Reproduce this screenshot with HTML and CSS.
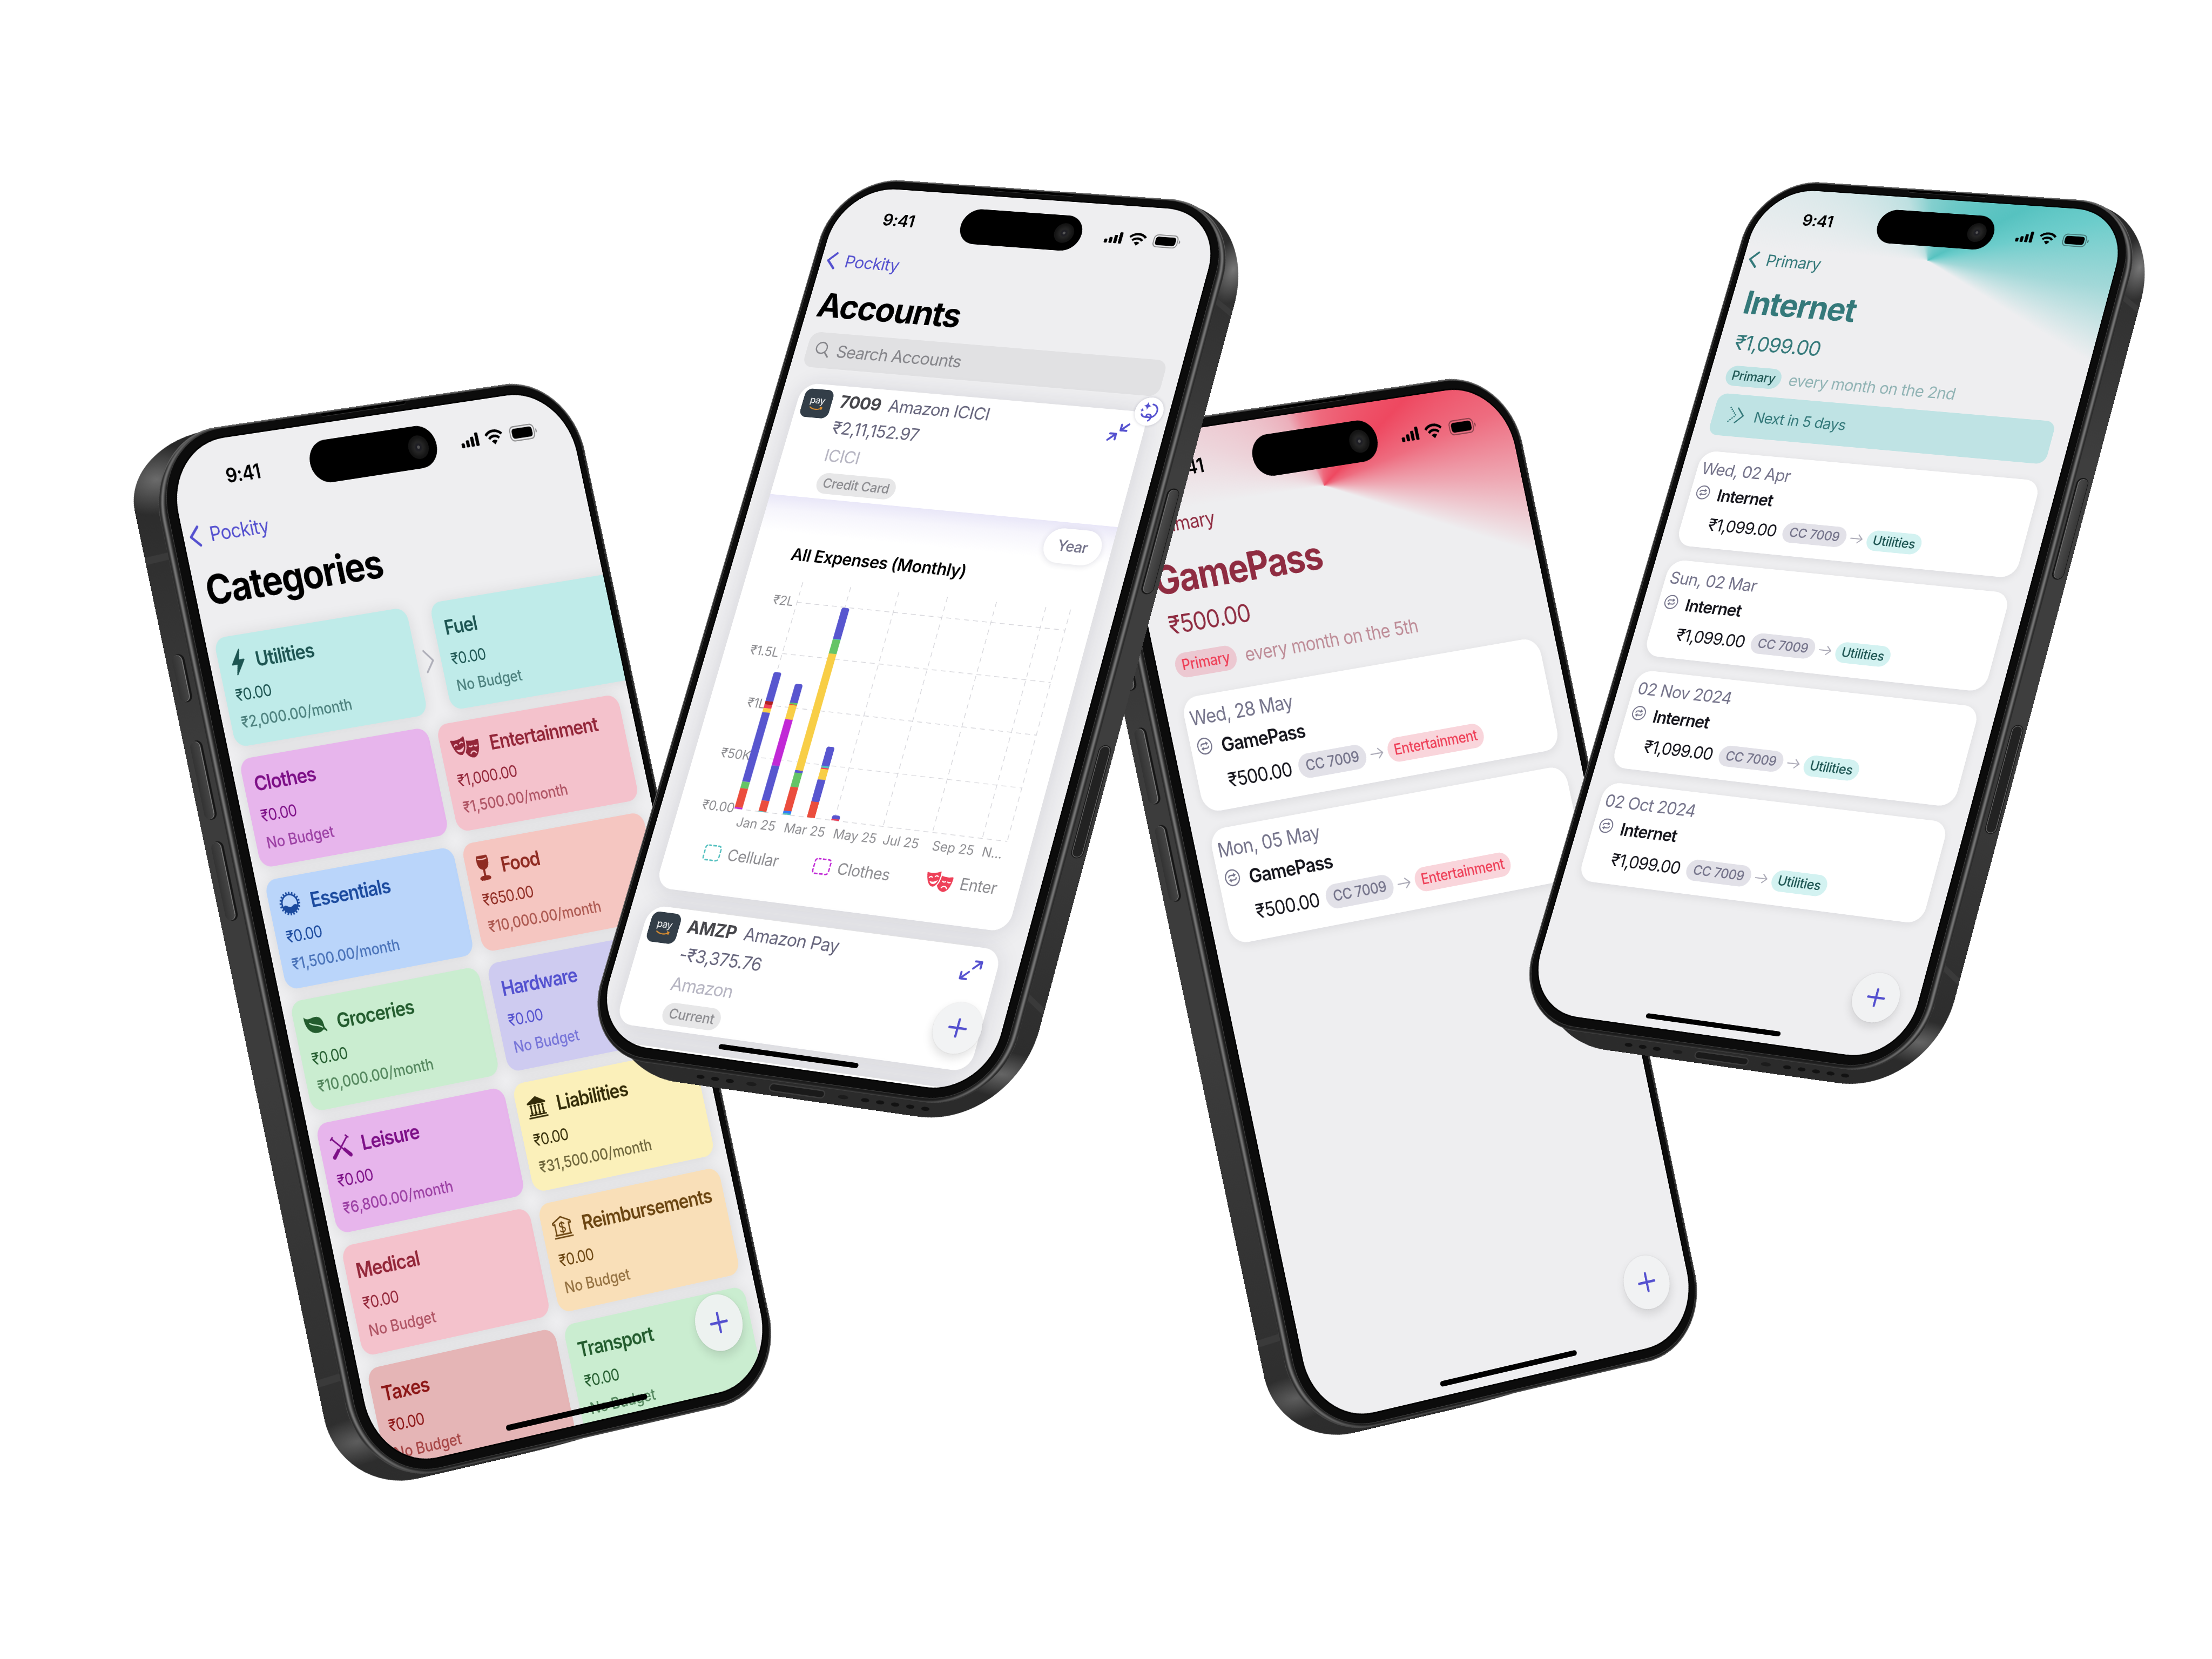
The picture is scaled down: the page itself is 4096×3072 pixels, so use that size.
FILE: index.html
```html
<!DOCTYPE html>
<html lang="en">
<head>
<meta charset="utf-8">
<title>Pockity</title>
<link rel="stylesheet" href="styles.css">
</head>
<body>
<svg class="sprite" width="0" height="0">
  <symbol id="i-status" viewBox="0 0 78 14">
    <rect x="0.500" y="8.500" width="3.200" height="4" rx="1"/><rect x="5.300" y="6.500" width="3.200" height="6" rx="1"/><rect x="10.100" y="4" width="3.200" height="8.500" rx="1"/><rect x="14.900" y="1" width="3.200" height="11.500" rx="1"/>
    <path d="M25.600 5.100a11.300 11.300 0 0 1 16 0M28.500 8.300a7.200 7.200 0 0 1 10.200 0" fill="none" stroke="currentColor" stroke-width="2.300"/>
    <path d="M30.800 10.500a4 4 0 0 1 5.600 0l-2.800 2.900z"/>
    <rect x="50" y="0.900" width="24" height="12.200" rx="4" fill="none" stroke="currentColor" stroke-opacity=".4" stroke-width="1"/>
    <rect x="51.800" y="2.700" width="20.400" height="8.600" rx="2.600"/>
    <path d="M75.500 5v4a2.300 2.300 0 0 0 0-4z" opacity=".45"/>
  </symbol>
  <symbol id="i-back" viewBox="0 0 12 20"><path d="M10.300 1.600 2 10l8.300 8.400" fill="none" stroke="currentColor" stroke-width="2.400" stroke-linecap="round" stroke-linejoin="round"/></symbol>
  <symbol id="i-next" viewBox="0 0 12 22"><path d="M2 2l7.500 9L2 20" fill="none" stroke="currentColor" stroke-width="1.700" stroke-linecap="round" stroke-linejoin="round"/></symbol>
  <symbol id="i-plus" viewBox="0 0 20 20"><path d="M10 1.700v16.600M1.700 10h16.600" fill="none" stroke="currentColor" stroke-width="2.300" stroke-linecap="round"/></symbol>
  <symbol id="i-bolt" viewBox="0 0 14 22"><path d="M9.300.5.800 12.200c-.3.400 0 .9.500.9h4.500L3.700 21c-.2.700.5 1 1 .500L13.200 9.900c.3-.4 0-.9-.5-.9H8.200L10.300 1.200c.2-.8-.5-1.200-1-.7z"/></symbol>
  <symbol id="i-masks" viewBox="0 0 30 22">
    <path d="M16.500 5.200c3.500 1.200 7.800 1.400 11.300.4.900-.2 1.500.3 1.500 1.200-.1 6-1.600 13.400-7.300 14.400-4.200-.1-7-3.300-8.300-7z"/>
    <path d="M1.600 2.700C5.600 3.800 10.500 3 14 .9c.9-.5 1.700 0 1.800.9.600 5.700.6 12.600-5.100 16C4.500 18.400 1.500 10.700.3 4.200c-.2-1 .4-1.700 1.300-1.500z" class="cut-edge"/>
    <path d="M4.100 8.500c.9-1.300 2-1.400 3-.5M10 7.100c.8-1.200 2-1.400 3-.5M19 10.700c1 .8 2 .8 3 .1M24.300 10.900c.9.700 1.800.7 2.700.1M19.300 17.300c1.500-2.300 4.200-2.300 5.600.1" class="cut-line"/>
    <path d="M5.300 12c3 .9 6 .1 8.200-2-.4 5.400-6.200 6.200-8.200 2z" class="cut-fill"/>
  </symbol>
  <symbol id="i-wine" viewBox="0 0 16 24"><path d="M3.200.7h9.600c.5 0 .9.300 1 .8 1.300 6-.1 11.300-4.700 12.100v5.500c3 .2 4.800 1 4.800 2.300 0 1.600-2.600 2.200-5.900 2.200s-5.900-.6-5.900-2.200c0-1.300 1.800-2.100 4.800-2.300v-5.500C2.300 12.800.9 7.500 2.200 1.500c.1-.5.5-.8 1-.8z"/><path d="M3.600 3.600c2.800.7 6 .7 8.800 0" class="cut-line"/></symbol>
  <symbol id="i-cap" viewBox="0 0 22 22"><circle cx="11" cy="11" r="9.700" fill="none" stroke="currentColor" stroke-width="2" stroke-dasharray="1.500 1.550"/><circle cx="11" cy="11" r="8.200" fill="none" stroke="currentColor" stroke-width="1.500"/><path d="M3.200 13.500c2-1.700 3.600-1.500 5.200-.3s3.600 1.200 5.200 0 3.400-1.300 5.200.3c-1.200 3.600-4.400 5.700-7.800 5.700s-6.600-2.100-7.800-5.700z"/></symbol>
  <symbol id="i-leaf" viewBox="0 0 23 19"><path d="M.6 1.200C2.300 3.500 5 3.300 8 2.700c5.500-1.100 10-.3 11.400 5 .6 2.300.4 4.300 1 5.500.6 1 1.600 1.700 1.900 3.100.1.600-.8.900-1.200.4-.8-1-1.400-1.700-2.700-1.800-2.200 2-6.200 2.600-10 1.500C2.500 14.400-.5 8.200.1 1.300c0-.4.300-.4.500-.1z"/><path d="M5.500 7.200c3 2.800 7.800 2 12.300 5.300" class="cut-line"/></symbol>
  <symbol id="i-tools" viewBox="0 0 22 22"><path d="M3 2.200 14 14M19.600 2.200 8.200 14.200" fill="none" stroke="currentColor" stroke-width="1.500"/><path d="M1.400 3.700 4.500.8M17.500.9l3.200 2.900" stroke="currentColor" stroke-width="1.400"/><path d="m12.400 13.900 2.200-2.200 6.300 6.200c1.600 1.900-.8 4.300-2.700 2.600zM9.700 13.900l-2.200-2.200-6.300 6.200c-1.600 1.900.8 4.300 2.700 2.600z"/></symbol>
  <symbol id="i-bank" viewBox="0 0 22 21"><path d="M11 .4 20.800 6c.5.300.3 1.500-.4 1.500H1.600c-.7 0-.9-1.200-.4-1.500zM1.800 16.800h18.400v1.300H1.800zM.6 19.100h20.800v1.500H.6z"/><path d="M4.700 8v9M8.900 8v9M13.100 8v9M17.300 8v9" stroke="currentColor" stroke-width="1.700"/><path d="M3.300 9h2.800M7.500 9h2.800M11.700 9h2.800M15.900 9h2.800M3.300 15.600h2.800M7.500 15.600h2.800M11.700 15.600h2.800M15.900 15.600h2.800" stroke="currentColor" stroke-width="1"/></symbol>
  <symbol id="i-house" viewBox="0 0 22 21"><path d="M3.500 17V6.500M18.500 17V6.500M1.500 7.500V5.800L11 .9l9.500 4.900v1.700h-2M1.500 7.500h2M2 17.300h18M.8 19.800h20.400" fill="none" stroke="currentColor" stroke-width="1.400" stroke-linejoin="round"/><path d="M13.700 7.900c-.5-1-1.500-1.400-2.700-1.400-1.500 0-2.600.7-2.600 2 0 2.900 5.400 1.300 5.400 4.200 0 1.300-1.200 2.100-2.800 2.100-1.400 0-2.500-.5-2.900-1.600M11 5.200v11" fill="none" stroke="currentColor" stroke-width="1.200"/></symbol>
  <symbol id="i-search" viewBox="0 0 18 20"><circle cx="7.500" cy="8" r="6.200" fill="none" stroke="currentColor" stroke-width="1.500"/><path d="m12 12.700 4.600 5" stroke="currentColor" stroke-width="1.800" stroke-linecap="round"/></symbol>
  <symbol id="i-shrink" viewBox="0 0 24 24"><path d="M22 2.500l-7.500 6.800M14 3.500v6.300h6.600M2 21.500l7.500-6.800M10 20.500v-6.300H3.400" fill="none" stroke="currentColor" stroke-width="2.300" stroke-linecap="round" stroke-linejoin="round"/></symbol>
  <symbol id="i-grow" viewBox="0 0 24 24"><path d="M13.700 10l7.800-7.500M14.800 2.200h7v6.800M10.300 14l-7.800 7.500M9.200 21.800h-7v-6.800" fill="none" stroke="currentColor" stroke-width="2.200" stroke-linecap="round" stroke-linejoin="round"/></symbol>
  <symbol id="i-magic" viewBox="0 0 24 24"><path d="M8.600.5c.6 3.300 1.500 4.300 4.600 5-3.100.8-4 1.700-4.600 5-.6-3.300-1.500-4.200-4.600-5C7.100 4.800 8 3.800 8.600.5zM3.400 8.200c.4 1.800.8 2.300 2.500 2.700-1.700.4-2.100.9-2.500 2.700-.4-1.800-.8-2.300-2.500-2.700 1.700-.4 2.100-.9 2.500-2.700z"/><path d="M14.600 3.200c4.600.6 7.300 4.600 6.500 9-.7 4.200-4.300 7-8.300 6.600-1.800-.2-3-1-2.800-2.200.2-1.300 2.200-1.800 4-1 2.400 1.200 2.300 4.800-.7 7.200M3.800 15.600c.8 2.200 3.600 3.600 7 3" fill="none" stroke="currentColor" stroke-width="1.900" stroke-linecap="round"/></symbol>
  <symbol id="i-dash" viewBox="0 0 20 18"><rect x="1.200" y="1.200" width="17.600" height="15.600" rx="3" fill="none" stroke="currentColor" stroke-width="1.500" stroke-dasharray="4 1.700" stroke-dashoffset="1"/></symbol>
  <symbol id="i-repeat" viewBox="0 0 18 18"><circle cx="9" cy="9" r="8" fill="none" stroke="currentColor" stroke-width="1.300"/><path d="M4.800 8.900c0-1.700 1-2.400 2.400-2.400h4M13.200 9.100c0 1.700-1 2.400-2.400 2.400h-4" fill="none" stroke="currentColor" stroke-width="1.300"/><path d="M10.600 4.300v4.400l2.900-2.200zM7.400 9.300v4.400l-2.900-2.200z"/></symbol>
  <symbol id="i-arrow" viewBox="0 0 16 12"><path d="M1 6h13.500M9.700 1.300 14.600 6l-4.900 4.700" fill="none" stroke="currentColor" stroke-width="1.200" stroke-linecap="round" stroke-linejoin="round"/></symbol>
  <symbol id="i-forward" viewBox="0 0 22 20"><path d="M11 1.500l8 8.500-8 8.500" fill="none" stroke="currentColor" stroke-width="1.600" stroke-linecap="round"/><path d="M2 1.500l8 8.500-8 8.500" fill="none" stroke="currentColor" stroke-width="1.700" stroke-linecap="round" stroke-dasharray=".1 2.650"/></symbol>
</svg>

<main class="board">

  <!-- Categories -->
  <section class="phone" data-corners="357,969 1221,840 1681,2994 822,3192">
    <div class="device lean-left">
      <div class="chassis"><i class="band band-top"></i><i class="band band-bottom"></i><i class="key key-action"></i><i class="key key-up"></i><i class="key key-down"></i></div>
      <div class="rim"></div>
      <div class="bezel"><i class="ear"></i></div>
      <div class="screen">
        <div class="nav indigo"><svg class="back"><use href="#i-back"/></svg>Pockity</div>
        <h1 class="title tight">Categories</h1>
        <div class="swipe-row">
          <article class="cat teal"><h2><svg class="bolt"><use href="#i-bolt"/></svg>Utilities</h2><p>₹0.00</p><small>₹2,000.00/month</small></article>
          <svg class="chev"><use href="#i-next"/></svg>
          <article class="cat teal bleed"><h2>Fuel</h2><p>₹0.00</p><small>No Budget</small></article>
        </div>
        <div class="grid">
          <article class="cat magenta"><h2>Clothes</h2><p>₹0.00</p><small>No Budget</small></article>
          <article class="cat pink"><h2><svg class="masks"><use href="#i-masks"/></svg>Entertainment</h2><p>₹1,000.00</p><small>₹1,500.00/month</small></article>
          <article class="cat blue"><h2><svg class="cap"><use href="#i-cap"/></svg>Essentials</h2><p>₹0.00</p><small>₹1,500.00/month</small></article>
          <article class="cat coral"><h2><svg class="wine"><use href="#i-wine"/></svg>Food</h2><p>₹650.00</p><small>₹10,000.00/month</small></article>
          <article class="cat green"><h2><svg class="leaf"><use href="#i-leaf"/></svg>Groceries</h2><p>₹0.00</p><small>₹10,000.00/month</small></article>
          <article class="cat violet"><h2>Hardware</h2><p>₹0.00</p><small>No Budget</small></article>
          <article class="cat magenta"><h2><svg class="tools"><use href="#i-tools"/></svg>Leisure</h2><p>₹0.00</p><small>₹6,800.00/month</small></article>
          <article class="cat yellow"><h2><svg class="bank"><use href="#i-bank"/></svg>Liabilities</h2><p>₹0.00</p><small>₹31,500.00/month</small></article>
          <article class="cat pink"><h2>Medical</h2><p>₹0.00</p><small>No Budget</small></article>
          <article class="cat orange"><h2><svg class="bank"><use href="#i-house"/></svg>Reimbursements</h2><p>₹0.00</p><small>No Budget</small></article>
          <article class="cat brick"><h2>Taxes</h2><p>₹0.00</p><small>No Budget</small></article>
          <article class="cat green"><h2>Transport</h2><p>₹0.00</p><small>No Budget</small></article>
        </div>
        <div class="status"><b>9:41</b><svg><use href="#i-status"/></svg></div>
        <div class="island"><i></i></div>
        <div class="fab"><svg><use href="#i-plus"/></svg></div>
        <div class="home"></div>
      </div>
    </div>
  </section>

  <!-- GamePass -->
  <section class="phone" data-corners="2407,958 3258,829 3688,2898 2857,3093">
    <div class="device lean-left">
      <div class="chassis"><i class="band band-top"></i><i class="band band-bottom"></i><i class="key key-action"></i><i class="key key-up"></i><i class="key key-down"></i></div>
      <div class="rim"></div>
      <div class="bezel"><i class="ear"></i></div>
      <div class="screen glow-red">
        <div class="nav wine-ink"><svg class="back"><use href="#i-back"/></svg>Primary</div>
        <h1 class="title wine-ink">GamePass</h1>
        <p class="amount wine-ink">₹500.00</p>
        <div class="meta wine-ink"><span class="tag tag-rose">Primary</span><span class="when">every month on the 5th</span></div>
        <div class="list list-a">
          <article class="txn"><time>Wed, 28 May</time><h3><svg><use href="#i-repeat"/></svg>GamePass</h3><div class="flow"><span>₹500.00</span><em class="tag tag-gray">CC 7009</em><svg><use href="#i-arrow"/></svg><em class="tag tag-red">Entertainment</em></div></article>
          <article class="txn"><time>Mon, 05 May</time><h3><svg><use href="#i-repeat"/></svg>GamePass</h3><div class="flow"><span>₹500.00</span><em class="tag tag-gray">CC 7009</em><svg><use href="#i-arrow"/></svg><em class="tag tag-red">Entertainment</em></div></article>
        </div>
        <div class="status"><b>9:41</b><svg><use href="#i-status"/></svg></div>
        <div class="island"><i></i></div>
        <div class="fab"><svg><use href="#i-plus"/></svg></div>
        <div class="home"></div>
      </div>
    </div>
  </section>

  <!-- Accounts -->
  <section class="phone" data-corners="1830,403 2655,461 2136,2377 1285,2257">
    <div class="device lean-right">
      <div class="chassis"><i class="band band-top"></i><i class="band band-bottom"></i><i class="band band-foot"></i><i class="key key-power"></i><i class="key key-camera"></i>
        <div class="port"><i class="hole"></i><i class="hole"></i><i class="hole"></i><i class="screw"></i><i class="usb"></i><i class="screw"></i><i class="hole"></i><i class="hole"></i><i class="hole"></i><i class="hole"></i><i class="hole"></i></div>
      </div>
      <div class="rim"></div>
      <div class="bezel"><i class="ear"></i></div>
      <div class="screen">
        <div class="nav indigo"><svg class="back"><use href="#i-back"/></svg>Pockity</div>
        <h1 class="title snug">Accounts</h1>
        <div class="search"><svg><use href="#i-search"/></svg>Search Accounts</div>
        <div class="accounts">
          <article class="acct">
            <header>
              <div class="logo"><span>pay</span><svg viewBox="0 0 16 5"><path d="M1 1.200c4 3 9.500 3.200 13.400.6M12.400.8l2.300.600-.5 2.300" fill="none" stroke="#e0902f" stroke-width="1.100"/></svg></div>
              <div class="info"><h4><b>7009</b>Amazon ICICI</h4><p class="bal">₹2,11,152.97</p><p class="bankname">ICICI</p><span class="tag tag-plain">Credit Card</span></div>
              <svg class="toggle"><use href="#i-shrink"/></svg>
            </header>
            <div class="badge"><svg><use href="#i-magic"/></svg></div>
            <div class="panel">
              <div class="year">Year</div>
              <h5>All Expenses (Monthly)</h5>
              <svg class="chart" viewBox="18 396 355 250">
                <g class="gridlines">
                  <path d="M78 402V624.500M127.500 402V624.500M177 402V624.500M226.500 402V624.500M276 402V624.500M325.500 402V624.500M350.200 402V624.500"/>
                  <path d="M78 422H350.200M78 472.600H350.200M78 523.200H350.200M78 573.800H350.200M78 624.500H350.200"/>
                </g>
                <g class="axis end"><text x="74.500" y="426">₹2L</text><text x="74.500" y="476.500">₹1.5L</text><text x="76" y="527">₹1L</text><text x="76" y="577.500">₹50K</text><text x="75" y="628.500">₹0.00</text></g>
                <g class="axis"><text x="81" y="641">Jan 25</text><text x="130" y="641">Mar 25</text><text x="180" y="641">May 25</text><text x="230" y="641">Jul 25</text><text x="279.500" y="641">Sep 25</text><text x="329" y="641">N...</text></g>
                <g transform="translate(75 0)">
                  <path class="c-indigo" d="M0 493a2 2 0 0 1 2-2h4a2 2 0 0 1 2 2v27H0z"/><rect class="c-brick" y="519.600" width="8" height="3.500"/><rect class="c-rose" y="523" width="8" height="3.500"/><rect class="c-gold" y="526.400" width="8" height="4.200"/><rect class="c-indigo" y="530.500" width="8" height="67.700"/><rect class="c-green" y="598.200" width="8" height="6.500"/><rect class="c-red" y="604.600" width="8" height="18.500"/><rect class="c-magenta" y="623" width="8" height="1.500"/>
                </g>
                <g transform="translate(99.750 0)">
                  <path class="c-indigo" d="M0 502a2 2 0 0 1 2-2h4a2 2 0 0 1 2 2v17H0z"/><rect class="c-green" y="518.400" width="8" height="1.600"/><rect class="c-red" y="520" width="8" height="1"/><rect class="c-gold" y="520.800" width="8" height="14"/><rect class="c-magenta" y="534.700" width="8" height="45.200"/><rect class="c-indigo" y="579.800" width="8" height="34"/><rect class="c-red" y="613.700" width="8" height="10.300"/><rect class="c-teal" y="624" width="8" height=".6"/>
                </g>
                <g transform="translate(124.500 0)">
                  <path class="c-indigo" d="M0 424.500a2 2 0 0 1 2-2h4a2 2 0 0 1 2 2v29H0z"/><rect class="c-teal" y="453.200" width="8" height="1"/><rect class="c-green" y="453.900" width="8" height="14"/><rect class="c-gold" y="467.700" width="8" height="114"/><rect class="c-indigo" y="581.600" width="8" height="2.500"/><rect class="c-green" y="584" width="8" height="13.800"/><rect class="c-red" y="597.700" width="8" height="23.200"/><rect class="c-blue" y="620.800" width="8" height="2.400"/><rect class="c-teal" y="623.100" width="8" height="1.400"/>
                </g>
                <g transform="translate(149.250 0)">
                  <path class="c-indigo" d="M0 558a2 2 0 0 1 2-2h4a2 2 0 0 1 2 2v17H0z"/><rect class="c-teal" y="574.600" width="8" height="2"/><rect class="c-rose" y="576.500" width="8" height="1.200"/><rect class="c-gold" y="577.600" width="8" height="10.300"/><rect class="c-indigo" y="587.800" width="8" height="21.500"/><rect class="c-red" y="609.200" width="8" height="15.300"/>
                </g>
                <g transform="translate(174 0)"><path class="c-indigo" d="M0 621.500a2 2 0 0 1 2-2h4a2 2 0 0 1 2 2v2H0z"/><rect class="c-rose" y="623" width="8" height="1.500"/></g>
              </svg>
              <div class="legend"><span><svg class="sq c-teal-ink"><use href="#i-dash"/></svg>Cellular</span><span><svg class="sq c-magenta-ink"><use href="#i-dash"/></svg>Clothes</span><span><svg class="mk c-rose-ink"><use href="#i-masks"/></svg>Enter</span></div>
            </div>
          </article>
          <article class="acct">
            <header>
              <div class="logo"><span>pay</span><svg viewBox="0 0 16 5"><path d="M1 1.200c4 3 9.500 3.200 13.400.6M12.400.8l2.300.600-.5 2.300" fill="none" stroke="#e0902f" stroke-width="1.100"/></svg></div>
              <div class="info"><h4><b>AMZP</b>Amazon Pay</h4><p class="bal">-₹3,375.76</p><p class="bankname">Amazon</p><span class="tag tag-plain">Current</span></div>
              <svg class="toggle"><use href="#i-grow"/></svg>
            </header>
          </article>
          <article class="acct peek"></article>
        </div>
        <div class="status"><b>9:41</b><svg><use href="#i-status"/></svg></div>
        <div class="island"><i></i></div>
        <div class="fab"><svg><use href="#i-plus"/></svg></div>
        <div class="home"></div>
      </div>
    </div>
  </section>

  <!-- Internet -->
  <section class="phone" data-corners="3829,407 4623,461 4128,2306 3308,2191">
    <div class="device lean-right">
      <div class="chassis"><i class="band band-top"></i><i class="band band-bottom"></i><i class="band band-foot"></i><i class="key key-power"></i><i class="key key-camera"></i>
        <div class="port"><i class="hole"></i><i class="hole"></i><i class="hole"></i><i class="screw"></i><i class="usb"></i><i class="screw"></i><i class="hole"></i><i class="hole"></i><i class="hole"></i><i class="hole"></i><i class="hole"></i></div>
      </div>
      <div class="rim"></div>
      <div class="bezel"><i class="ear"></i></div>
      <div class="screen glow-teal">
        <div class="nav teal-ink"><svg class="back"><use href="#i-back"/></svg>Primary</div>
        <h1 class="title teal-ink">Internet</h1>
        <p class="amount teal-ink low">₹1,099.00</p>
        <div class="meta teal-ink"><span class="tag tag-mint">Primary</span><span class="when">every month on the 2nd</span></div>
        <div class="next"><svg><use href="#i-forward"/></svg>Next in 5 days</div>
        <div class="list">
          <article class="txn"><time>Wed, 02 Apr</time><h3><svg><use href="#i-repeat"/></svg>Internet</h3><div class="flow"><span>₹1,099.00</span><em class="tag tag-gray">CC 7009</em><svg><use href="#i-arrow"/></svg><em class="tag tag-aqua">Utilities</em></div></article>
          <article class="txn"><time>Sun, 02 Mar</time><h3><svg><use href="#i-repeat"/></svg>Internet</h3><div class="flow"><span>₹1,099.00</span><em class="tag tag-gray">CC 7009</em><svg><use href="#i-arrow"/></svg><em class="tag tag-aqua">Utilities</em></div></article>
          <article class="txn"><time>02 Nov 2024</time><h3><svg><use href="#i-repeat"/></svg>Internet</h3><div class="flow"><span>₹1,099.00</span><em class="tag tag-gray">CC 7009</em><svg><use href="#i-arrow"/></svg><em class="tag tag-aqua">Utilities</em></div></article>
          <article class="txn"><time>02 Oct 2024</time><h3><svg><use href="#i-repeat"/></svg>Internet</h3><div class="flow"><span>₹1,099.00</span><em class="tag tag-gray">CC 7009</em><svg><use href="#i-arrow"/></svg><em class="tag tag-aqua">Utilities</em></div></article>
        </div>
        <div class="status"><b>9:41</b><svg><use href="#i-status"/></svg></div>
        <div class="island"><i></i></div>
        <div class="fab"><svg><use href="#i-plus"/></svg></div>
        <div class="home"></div>
      </div>
    </div>
  </section>
</main>
<script src="phones.js"></script>
</body>
</html>
```
FILE: styles.css
```css
* { box-sizing: border-box; margin: 0; padding: 0; }
html, body { background: #fff; }
body { width: 4096px; height: 3072px; overflow: hidden; font-family: Inter, "Noto Sans", "Liberation Sans", sans-serif; }
svg { display: block; fill: currentColor; flex: none; }
.sprite { position: absolute; }
i, em { font-style: normal; }

.board { position: relative; width: 4096px; height: 3072px; overflow: hidden; }

/* A phone is laid out flat at 2.5x and projected onto its four screen corners by phones.js */
.phone { position: absolute; left: 0; top: 0; width: 982.5px; height: 2130px; transform-origin: 0 0; }
.device { position: relative; width: 393px; height: 852px; zoom: 2.5; }

/* ---------- hardware ---------- */
.chassis, .rim, .bezel { position: absolute; }
.chassis { overflow: hidden; }
.lean-left .chassis {
  inset: -8px 24px -13px -40px; border-radius: 87px 70px 240px 74px / 57px 70px 40px 64px;
  background:
    radial-gradient(60px 36px at 26px 34px, rgba(150,150,150,.6), transparent 80%),
    radial-gradient(60px 24px at 26px calc(100% - 40px), rgba(140,140,140,.5), transparent 80%),
    linear-gradient(180deg, rgba(20,20,20,.5) 0, rgba(20,20,20,0) 30%, rgba(20,20,20,0) 60%, rgba(20,20,20,.4) 100%),
    #3c3c3c;
}
.lean-left .rim {
  inset: -9.500px -8px -11.500px -18px; border-radius: 70px 66px 66px 72px; background: #1c1c1c;
  box-shadow: inset 0 1px .6px #6c6c6c, inset -.8px 0 .5px #5a5a5a, inset 0 -1px .6px #4a4a4a, inset 2.500px 0 1.500px #2b2b2b, inset 5px 0 2px #868686;
}
.lean-left .bezel { inset: -8px -6px -8.500px -9.500px; border-radius: 65px 63px 63px 66px; background: #0c0c0c; box-shadow: 0 0 0 .5px #3f3f3f; }
.lean-right .chassis {
  inset: -6px -35px -27px 4px; border-radius: 70px 82px 92px 92px / 70px 96px 92px 90px;
  background:
    radial-gradient(26px 40px at calc(100% - 10px) 62px, rgba(150,150,150,.7), transparent 85%),
    radial-gradient(60px 24px at calc(100% - 24px) calc(100% - 48px), rgba(140,140,140,.6), transparent 85%),
    linear-gradient(180deg, rgba(20,20,20,.5) 0, rgba(20,20,20,0) 30%, rgba(20,20,20,0) 60%, rgba(20,20,20,.45) 96%),
    #3e3e3e;
}
.lean-right .rim {
  inset: -9.500px -17px -13.500px -8.500px; border-radius: 68px 74px 72px 68px; background: #1c1c1c;
  box-shadow: inset 0 1px .6px #6c6c6c, inset .8px 0 .5px #6a6a6a, inset -2.500px 0 1.500px #2b2b2b, inset -5px 0 2px #868686;
}
.lean-right .bezel { inset: -8px -8.500px -9.500px -6px; border-radius: 65px 66px 66px 63px; background: #0c0c0c; box-shadow: 0 0 0 .5px #3f3f3f; }
.ear { position: absolute; top: 0; height: 2.500px; border-radius: 0 0 3px 3px; width: 84px; left: 50%; margin-left: -42px; background: #000; box-shadow: 0 .5px 0 #333; }
.band { position: absolute; background: #3a3a3a; }
.lean-left .band { left: 0; width: 26px; height: 6px; transform: skewY(-4deg); }
.lean-left .band-top { top: 95px; }
.lean-left .band-bottom { bottom: 90px; }
.lean-right .band { right: 0; width: 22px; height: 6px; transform: skewY(32deg); }
.lean-right .band-top { top: 96px; }
.lean-right .band-bottom { bottom: 112px; }
.lean-right .band-foot { right: auto; left: 68px; bottom: 0; width: 6px; height: 16px; transform: skewX(35deg); background: #2c2c2c; }
.key { position: absolute; width: 9px; border-radius: 5px; background: linear-gradient(90deg, #333, #454545); box-shadow: .6px 0 0 .3px #777, 2px 0 0 1px #161616; }
.lean-left .key { left: 5.500px; }
.key-action { top: 179px; height: 38px; }
.key-up { top: 251px; height: 64px; }
.key-down { top: 335px; height: 64px; }
.lean-right .key { right: 4.500px; background: linear-gradient(90deg, #4a4a4a, #383838); box-shadow: -.5px 0 0 .4px #6c6c6c, -1px 0 0 1.500px #161616; }
.key-power { top: 281px; height: 100px; }
.lean-right .key-camera { top: 529px; height: 104px; background: #222; box-shadow: 0 0 0 .7px #666, 0 0 0 1.500px #161616; }
.port { position: absolute; left: 109px; bottom: 3.500px; width: 232px; display: flex; align-items: center; justify-content: space-between; }
.hole { width: 8px; height: 3.500px; border-radius: 50%; background: #121212; }
.screw { width: 10px; height: 3.500px; border-radius: 50%; background: #1c1c1c; margin: 0 6px; }
.usb { width: 56px; height: 8px; border-radius: 5px; background: #1a1a1a; border: 1.500px solid #3c3c3c; }

/* ---------- screen ---------- */
.screen { position: absolute; inset: 0; border-radius: 57px; overflow: hidden; background: #eeeef0; box-shadow: 0 0 0 1.200px #000; padding-top: 60px; color: #000; }
.glow-red { background: conic-gradient(from 270deg at 196.500px 65px, rgba(232,72,100,0) 0deg, rgba(232,72,100,.16) 26deg, rgba(232,72,100,.27) 50deg, rgba(232,72,100,.38) 70deg, rgba(236,72,98,.6) 80deg, rgba(238,72,96,.8) 100deg, rgba(238,72,96,1) 147deg, rgba(238,72,96,.78) 168deg, rgba(238,72,96,.42) 186deg, rgba(238,72,96,0) 204deg), #eeeef0; }
.glow-teal { background: conic-gradient(from 270deg at 196.500px 65px, rgba(86,194,192,0) 0deg, rgba(86,194,192,.13) 26deg, rgba(86,194,192,.32) 58deg, rgba(86,194,192,.7) 78deg, rgba(86,194,192,.84) 100deg, rgba(86,194,192,1) 145deg, rgba(90,200,198,.88) 162deg, rgba(86,194,192,.5) 184deg, rgba(86,194,192,0) 205deg), #eeeef0; }
.status { position: absolute; left: 0; right: 0; top: 20.500px; height: 24px; display: flex; align-items: center; justify-content: space-between; padding: 0 33.500px 0 51.500px; }
.status b { font-size: 17px; font-weight: 600; letter-spacing: -.3px; margin-bottom: 2px; }
.status svg { width: 78px; height: 14px; margin-top: 1px; }
.island { position: absolute; left: 133px; top: 14px; width: 125px; height: 36px; border-radius: 18px; background: #000; }
.island i { position: absolute; right: 8px; top: 8px; width: 20px; height: 20px; border-radius: 50%; background: radial-gradient(circle at 50% 50%, #555 0 8%, #1c1c24 12%, #262626 30%, #151515 60%, #111 100%); }
.fab { position: absolute; left: 327px; top: 772px; width: 47px; height: 47px; border-radius: 50%; background: rgba(241,242,243,.9); display: grid; place-items: center; color: #5450cf; box-shadow: 0 0 1px rgba(0,0,0,.15), 0 4px 9px rgba(0,0,0,.12); }
.fab svg { width: 19px; height: 19px; }
.home { position: absolute; left: 126.500px; top: 839px; width: 140px; height: 5px; border-radius: 3px; background: #000; }

.nav { height: 34px; display: flex; align-items: center; gap: 9px; padding-left: 5px; font-size: 17px; letter-spacing: -.42px; }
.nav .back { width: 11px; height: 20px; }
.title { height: 41px; line-height: 41px; margin: 8.500px 0 1.500px 14.500px; font-size: 33.500px; font-weight: 700; letter-spacing: -1px; white-space: nowrap; }
.title.tight { margin-left: 10.500px; letter-spacing: -.85px; }
.title.snug { margin-left: 10.500px; }
.indigo { color: #5450cf; }
.wine-ink { color: #8f2c41; }
.teal-ink { color: #34797a; }

/* ---------- categories ---------- */
.swipe-row { display: flex; align-items: center; margin: 19px 0 10px 8px; }
.swipe-row .cat { flex: 0 0 187px; }
.swipe-row .cat.bleed { flex: 0 0 200px; }
.chev { width: 12px; height: 23px; margin: 4px 5.500px 0 6px; color: #b0b0ba; }
.grid { display: grid; grid-template-columns: 183px 182px; gap: 10.300px 9px; padding-left: 8px; }
.cat { height: 91px; border-radius: 11px; padding: 9.500px 0 0 9.700px; box-shadow: 0 1px 13px rgba(0,0,10,.09); color: var(--ink); background: var(--bg); white-space: nowrap; }
.cat h2 { display: flex; align-items: center; gap: 9.500px; height: 25px; font-size: 17px; font-weight: 600; letter-spacing: -.6px; }
.cat p { height: 26px; line-height: 29px; font-size: 13.500px; letter-spacing: -.35px; }
.cat small { display: block; height: 22px; line-height: 22px; font-size: 13px; font-weight: 500; letter-spacing: -.08px; opacity: .7; }
.cut-edge { stroke: var(--bg); stroke-width: 1.200; }
.cut-line { fill: none; stroke: var(--bg); stroke-width: 1.200; stroke-linecap: round; }
.cut-fill { fill: var(--bg); }
.bolt { width: 14px; height: 22px; margin-left: 2px; }
.masks { width: 29px; height: 21px; }
.cap { width: 20px; height: 20px; }
.wine { width: 15px; height: 22px; }
.leaf { width: 21px; height: 17px; }
.tools { width: 20px; height: 20px; }
.bank { width: 20px; height: 19px; }
.teal { --bg: #bfebe9; --ink: #1d5552; }
.magenta { --bg: #e7b5ec; --ink: #7d0f87; }
.pink { --bg: #f4c2cc; --ink: #932639; }
.blue { --bg: #bad5fa; --ink: #1b4a9e; }
.coral { --bg: #f5c6c1; --ink: #8f2b22; }
.green { --bg: #caedd0; --ink: #235c2e; }
.violet { --bg: #cecbf0; --ink: #5250cf; }
.yellow { --bg: #fbf0ba; --ink: #332c08; }
.orange { --bg: #f9dfb8; --ink: #6b4511; }
.brick { --bg: #e5b5b6; --ink: #8c1616; }

/* ---------- subscriptions ---------- */
.amount { height: 26px; line-height: 26px; margin: 5px 0 0 19.500px; font-size: 21.500px; letter-spacing: -.6px; }
.amount.low { margin: 9px 0 0 17px; }
.meta { display: flex; align-items: center; gap: 8.500px; height: 24px; margin: 10px 0 0 17.500px; font-size: 16.500px; }
.when { opacity: .5; letter-spacing: -.35px; }
.tag { display: inline-block; height: 21px; line-height: 21px; border-radius: 11px; padding: 0 6.500px; font-size: 13px; font-weight: 500; letter-spacing: -.2px; white-space: nowrap; }
.tag-rose { background: #ecc8d1; color: #ee4058; }
.tag-mint { background: #bfe3e4; color: #1d5552; }
.tag-gray { background: #e2e1e8; color: #74738a; padding: 0 7px; }
.tag-red { background: #f9d5db; color: #ee4058; }
.tag-aqua { background: #d3f2f1; color: #1d5552; }
.tag-plain { background: #e7e7e8; color: #8c8c90; }
.next { display: flex; align-items: center; gap: 9.500px; height: 44px; margin: 7px 18px 0 16px; padding-left: 15px; border-radius: 10px; background: #bfe3e4; color: #34797a; font-size: 15.500px; letter-spacing: -.4px; }
.next svg { width: 20px; height: 18px; }
.list { display: flex; flex-direction: column; gap: 15px; margin: 17px 17px 0 16px; }
.list-a { margin-top: 15.500px; }
.txn { height: 99px; border-radius: 16px; background: #fff; padding: 5px; box-shadow: 0 2px 9px rgba(0,0,20,.08); }
.txn time { display: block; height: 26px; line-height: 26px; font-size: 17px; letter-spacing: -.42px; color: #74738a; }
.txn h3 { display: flex; align-items: center; gap: 8.500px; height: 27px; padding-left: 1px; font-size: 17px; font-weight: 600; letter-spacing: -.55px; color: #15151c; }
.txn h3 svg { width: 15px; height: 15px; color: #74738a; margin-bottom: 3px; }
.flow { display: flex; align-items: center; height: 34px; padding-left: 24px; color: #15151c; }
.flow span { font-size: 17px; letter-spacing: -.5px; margin-right: 7px; }
.flow svg { width: 14px; height: 11px; margin: 0 4px; color: #a9a8b5; }

/* ---------- accounts ---------- */
.search { display: flex; align-items: center; gap: 7px; height: 36px; margin: 7px 15px 0 12px; padding: 0 0 1px 8.500px; border-radius: 10px; background: #e1e1e3; color: #848489; font-size: 17px; letter-spacing: -.5px; }
.search svg { width: 16px; height: 19px; }
.accounts { display: flex; flex-direction: column; gap: 17px; margin: 16px 20px 0 18px; }
.acct { position: relative; border-radius: 17px; background: #fff; box-shadow: 0 2px 22px rgba(40,40,70,.13); }
.acct.peek { height: 60px; }
.acct header { display: flex; height: 113px; padding: 5px 14px 0 5.500px; align-items: flex-start; }
.logo { flex: none; width: 30px; height: 29px; border-radius: 7px; background: #333e48; color: #fff; font-size: 9.500px; line-height: 9px; text-align: center; padding-top: 7px; letter-spacing: -.3px; }
.logo svg { width: 15px; height: 5px; margin: 1px auto 0; }
.info { flex: 1; padding-left: 8.500px; }
.info h4 { height: 21px; line-height: 21px; font-size: 17px; font-weight: 400; letter-spacing: -.42px; color: #66657c; }
.info h4 b { margin-right: 8px; color: #46464b; letter-spacing: -.25px; }
.bal { height: 32px; line-height: 32px; font-size: 17px; letter-spacing: -.25px; color: #66657c; }
.bankname { height: 24px; line-height: 24px; font-size: 17px; letter-spacing: -.45px; color: #b5b4c1; }
.info .tag { margin-top: 5px; }
.toggle { width: 21px; height: 21px; margin-top: 6px; color: #5450cf; }
.badge { position: absolute; right: -14px; top: -15px; width: 28px; height: 28px; border-radius: 50%; background: #fff; box-shadow: 0 0 3px rgba(60,60,90,.25); display: grid; place-items: center; color: #5450cf; }
.badge svg { width: 20px; height: 20px; }
.panel { height: 388px; border-radius: 0 0 17px 17px; background: linear-gradient(180deg, #e9e7f8 0, #f6f5fc 14px, #fff 36px); padding-top: 6px; }
.year { width: 57px; height: 34px; line-height: 34px; margin: 0 10px 0 auto; border-radius: 17px; background: #fff; box-shadow: 0 1px 6px rgba(40,40,80,.14); text-align: center; font-size: 14.500px; font-weight: 500; letter-spacing: -.35px; color: #74738a; }
.panel h5 { margin: 4.500px 0 0 39.500px; height: 24px; line-height: 24px; font-size: 16.500px; font-weight: 600; letter-spacing: -.22px; }
.chart { width: 355px; height: 250px; margin: 8.500px 0 0 -1px; }
.gridlines path { fill: none; stroke: #d5d5da; stroke-width: .7; stroke-dasharray: 5 4; }
.axis text { font-size: 12.500px; fill: #8c8c90; letter-spacing: -.05px; }
.axis.end text { text-anchor: end; }
.c-indigo { fill: #5856cf; } .c-brick { fill: #b3201f; } .c-rose { fill: #ee4058; } .c-gold { fill: #f8ce46; } .c-green { fill: #65c466; } .c-red { fill: #eb4d3d; } .c-magenta { fill: #c128d6; } .c-teal { fill: #53c0bf; } .c-blue { fill: #3478f6; }
.c-teal-ink { color: #53c0bf; } .c-magenta-ink { color: #c128d6; } .c-rose-ink { color: #ee4058; --bg: #fff; }
.legend { display: flex; gap: 35px; height: 30px; margin: 7.500px 0 0 38px; font-size: 15px; letter-spacing: -.2px; color: #8c8c90; }
.legend span { display: flex; align-items: center; gap: 7px; }
.sq { width: 18px; height: 17px; }
.mk { width: 28px; height: 21px; }
```
FILE: phones.js
```js
// Projects every flat phone onto the quadrilateral of its screen corners
// (top-left, top-right, bottom-right, bottom-left on a 4800-wide artboard).
const SCALE = 4096 / 4800;

function project(el) {
  const [p0, p1, p2, p3] = el.dataset.corners.split(' ').map(p => p.split(',').map(n => n * SCALE));
  const w = 982.5, h = 2130;
  const dx1 = p1[0] - p2[0], dx2 = p3[0] - p2[0], sx = p0[0] - p1[0] + p2[0] - p3[0];
  const dy1 = p1[1] - p2[1], dy2 = p3[1] - p2[1], sy = p0[1] - p1[1] + p2[1] - p3[1];
  const den = dx1 * dy2 - dx2 * dy1;
  const g = (sx * dy2 - dx2 * sy) / den;
  const k = (dx1 * sy - sx * dy1) / den;
  const m = [
    (p1[0] - p0[0] + g * p1[0]) / w, (p1[1] - p0[1] + g * p1[1]) / w, 0, g / w,
    (p3[0] - p0[0] + k * p3[0]) / h, (p3[1] - p0[1] + k * p3[1]) / h, 0, k / h,
    0, 0, 1, 0,
    p0[0], p0[1], 0, 1
  ];
  el.style.transform = `matrix3d(${m.join(',')})`;
}

document.querySelectorAll('.phone').forEach(project);
```
